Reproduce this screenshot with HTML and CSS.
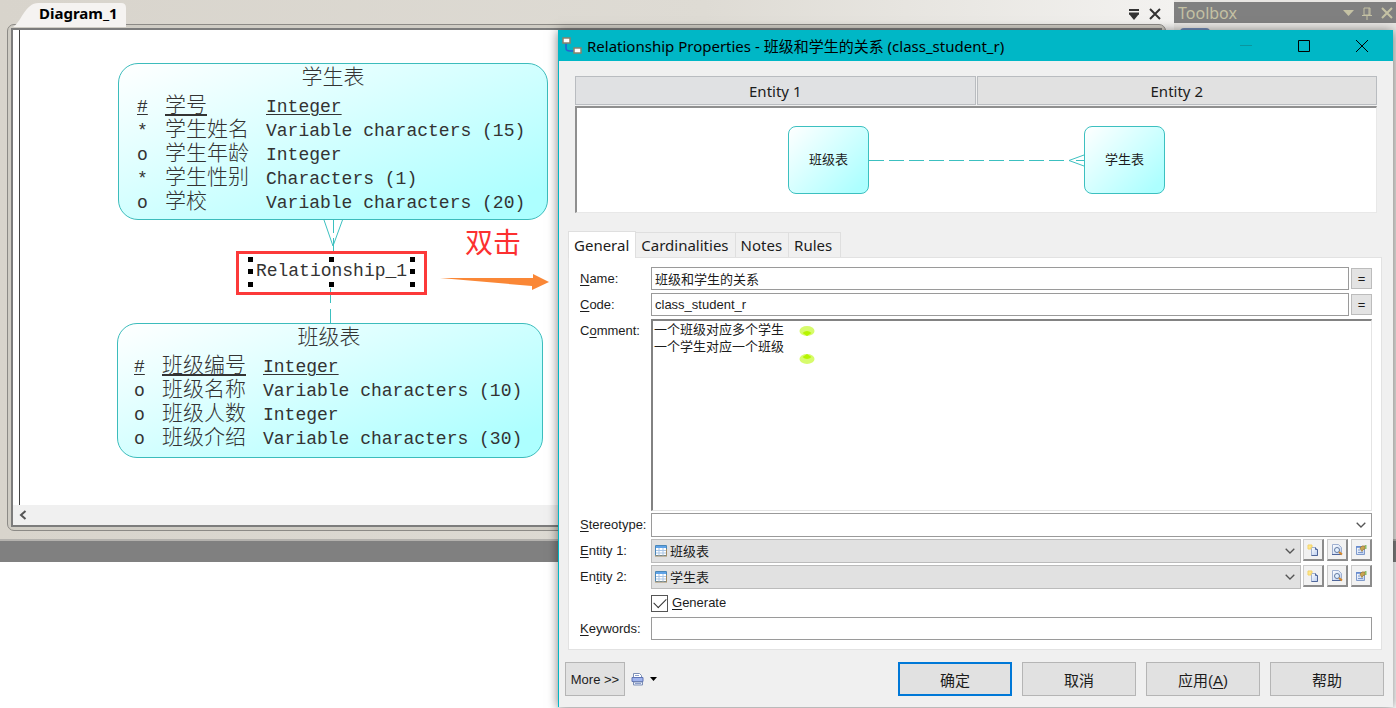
FILE: index.html
```html
<!DOCTYPE html>
<html lang="zh-CN">
<head>
<meta charset="utf-8">
<title>Relationship Properties</title>
<link rel="stylesheet" href="styles.css">
</head>
<body>
<svg class="defs" aria-hidden="true">
  <defs>
    <linearGradient id="doc" x1="0" y1="0" x2="1" y2="1"><stop offset="0" stop-color="#fff"/><stop offset="1" stop-color="#b9cdf0"/></linearGradient>
    <symbol id="i-new" viewBox="0 0 12 12">
      <path d="M4.500 3.500h4l2 2v6h-6z" fill="url(#doc)" stroke="#9fb0d0"/>
      <path d="M8.500 3.500v2h2v6h-6" fill="none" stroke="#50669a"/>
      <path d="M1 1h4v2H4v2H1z" fill="#ffe88a" stroke="#f3d36a"/>
    </symbol>
    <symbol id="i-find" viewBox="0 0 12 12">
      <path d="M1.500.5h6l3 3v7h-9z" fill="url(#doc)" stroke="#9fb0d0"/>
      <path d="M1 10.500h9" stroke="#50669a"/>
      <circle cx="6" cy="6" r="2.500" fill="#e3f1ff" stroke="#63799f"/>
      <path d="M8 8l3 2.500" stroke="#d98b2b" stroke-width="2"/>
    </symbol>
    <symbol id="i-props" viewBox="0 0 12 12">
      <path d="M1.500 2.500h8v8h-8z" fill="url(#doc)" stroke="#7f9acb"/>
      <path d="M1 3h8" stroke="#5f86cf" stroke-width="1.500"/>
      <path d="M3 6h2M3 8.500h5" stroke="#7f9acb"/>
      <path d="M5 4l2-2h3v3L8 5.500 7 7.500 6 6z" fill="#c9a552" stroke="#9a7a3c" stroke-width=".8"/>
      <path d="M10 1h1.500v4H10z" fill="#8abd68"/>
    </symbol>
    <symbol id="i-table" viewBox="0 0 12 12">
      <path d="M.5.5h11v10H.5z" fill="#fff" stroke="#4a87b8"/>
      <path d="M1 1h10v2H1z" fill="#5fa3e8"/>
      <path d="M1 5.500h10M1 8h10M4 3v8M8 3v8" stroke="#a9c5e5"/>
      <path d="M0 11h12M11.500 4v7" stroke="#a38b62"/>
    </symbol>
    <symbol id="i-chev" viewBox="0 0 10 6"><path d="M.7.7L5 5 9.300.7" fill="none" stroke="#555" stroke-width="1.300"/></symbol>
  </defs>
</svg>

<main class="workspace">
  <section class="document">
    <header class="doc-bar">
      <div class="doc-tab"><svg class="tab-shape" viewBox="0 0 116 24" preserveAspectRatio="none"><path d="M0 24C8 20 12 0 26 0h84q5 0 5 5v19z" fill="#f5f3f1"/></svg><span>Diagram_1</span></div>
      <div class="doc-tools">
        <button aria-label="Window list"><svg width="12" height="12"><path d="M1 2h10M1 5.500h10" stroke="#333" stroke-width="2"/><path d="M1 6h10L6 12z" fill="#333"/></svg></button>
        <button aria-label="Close"><svg width="12" height="12"><path d="M1 1l10 10M11 1L1 11" stroke="#333" stroke-width="2"/></svg></button>
      </div>
    </header>
    <div class="doc-frame"><div class="doc-inner">
      <div class="canvas">
        <svg class="links" width="550" height="475">
          <g fill="none" stroke="#3cc0c0" stroke-width="1">
            <path d="M304 190l9 26 9.500-26M313.500 190v13M313.500 208v13M310.500 258v15M310.500 279v14"/>
          </g>
          <path d="M420 248h93v-4l16 8-17 8v-4z" fill="#fa8736"/>
        </svg>
        <article class="entity entity-student">
          <h2>学生表</h2>
          <table>
            <tr class="key"><td><u>#</u></td><td><u>学号</u></td><td><u>Integer</u></td></tr>
            <tr><td>*</td><td>学生姓名</td><td>Variable characters (15)</td></tr>
            <tr><td>o</td><td>学生年龄</td><td>Integer</td></tr>
            <tr><td>*</td><td>学生性别</td><td>Characters (1)</td></tr>
            <tr><td>o</td><td>学校</td><td>Variable characters (20)</td></tr>
          </table>
        </article>
        <article class="entity entity-class">
          <h2>班级表</h2>
          <table>
            <tr class="key"><td><u>#</u></td><td><u>班级编号</u></td><td><u>Integer</u></td></tr>
            <tr><td>o</td><td>班级名称</td><td>Variable characters (10)</td></tr>
            <tr><td>o</td><td>班级人数</td><td>Integer</td></tr>
            <tr><td>o</td><td>班级介绍</td><td>Variable characters (30)</td></tr>
          </table>
        </article>
        <div class="relation"><span>Relationship_1</span>
          <svg class="handles" viewBox="0 0 168 30"><path d="M0 0h5v5H0zM81 0h5v5h-5zM162 0h5v5h-5zM0 12h5v5H0zM162 12h5v5h-5zM0 25h5v5H0zM81 25h5v5h-5zM162 25h5v5h-5z" fill="#000"/></svg>
        </div>
        <strong class="note">双击</strong>
      </div>
      <div class="scrollbar"><button aria-label="Scroll left"><svg width="8" height="10"><path d="M6.500 1L2 5l4.500 4" fill="none" stroke="#555" stroke-width="2"/></svg></button></div>
    </div></div>
  </section>
  <aside class="toolbox">
    <header><span>Toolbox</span>
      <svg width="52" height="14" viewBox="0 0 52 14" fill="none" stroke="#c5c2a4"><path d="M2 4h11L7.500 10z" fill="#c5c2a4" stroke="none"/><path d="M23 2h6v7h-6zM21 9.500h10M26 10v4M28 2v7"/><path d="M41 2l10 10M51 2L41 12" stroke-width="2"/></svg>
    </header>
    <div class="palette"><span></span></div>
  </aside>
</main>
<div class="band"></div>

<section class="dialog" role="dialog" aria-labelledby="dlg-title">
  <header class="titlebar">
    <svg width="20" height="20" viewBox="0 0 20 20"><path d="M4 7v5q0 3 4 3h3" fill="none" stroke="#275fd0" stroke-width="1.500"/><path d="M1 2h7v5H1zM12 12h7v5h-7z" fill="#fff" stroke="#8b826c" stroke-width="1.500"/></svg>
    <h1 id="dlg-title">Relationship Properties - <span>班级和学生的关系</span> (class_student_r)</h1>
    <div class="win-buttons">
      <button aria-label="Minimize"><svg width="12" height="12"><path d="M0 5.500h12" stroke="#0a969f"/></svg></button>
      <button aria-label="Maximize"><svg width="12" height="12"><path d="M.5.5h11v11H.5z" fill="none" stroke="#000"/></svg></button>
      <button aria-label="Close"><svg width="12" height="12"><path d="M0 0l12 12M12 0L0 12" stroke="#000"/></svg></button>
    </div>
  </header>

  <div class="ends"><button class="end">Entity 1</button><button class="end end-two">Entity 2</button></div>
  <div class="preview">
    <div class="mini">班级表</div>
    <svg class="mini-link" width="215" height="20"><g fill="none" stroke="#3cc0c0"><path d="M0 10.500h200" stroke-dasharray="15 5"/><path d="M215 5l-15 5.500L215 16M207 10.500h8"/></g></svg>
    <div class="mini">学生表</div>
  </div>

  <nav class="tabs"><button class="tab active">General</button><button class="tab">Cardinalities</button><button class="tab">Notes</button><button class="tab">Rules</button></nav>
  <form class="panel">
    <label for="name"><u>N</u>ame:</label>
    <div class="field"><input id="name" type="text" value="班级和学生的关系"><button type="button" class="eq">=</button></div>
    <label for="code"><u>C</u>ode:</label>
    <div class="field"><input id="code" type="text" value="class_student_r"><button type="button" class="eq">=</button></div>
    <label for="comment">C<u>o</u>mment:</label>
    <div class="field comment"><textarea id="comment">一个班级对应多个学生
一个学生对应一个班级</textarea>
      <svg class="marks" width="16" height="40"><ellipse cx="8" cy="6" rx="7.500" ry="5" fill="#d7fb6c"/><path d="M3.500 8q4.500-4 9 0L8 11z" fill="#b6f500"/><ellipse cx="8" cy="34" rx="7.500" ry="5" fill="#d7fb6c"/><path d="M3.500 32q4.500 4 9 0L8 29z" fill="#b6f500"/></svg>
    </div>
    <label for="stereo"><u>S</u>tereotype:</label>
    <div class="field"><div class="combo"><select id="stereo" class="plain"><option></option></select><svg class="chev"><use href="#i-chev"/></svg></div></div>
    <label for="e1"><u>E</u>ntity 1:</label>
    <div class="field">
      <div class="combo"><svg class="kind"><use href="#i-table"/></svg><select id="e1"><option>班级表</option></select><svg class="chev"><use href="#i-chev"/></svg></div>
      <div class="tools"><button type="button" aria-label="New"><svg><use href="#i-new"/></svg></button><button type="button" aria-label="Find"><svg><use href="#i-find"/></svg></button><button type="button" aria-label="Properties"><svg><use href="#i-props"/></svg></button></div>
    </div>
    <label for="e2">En<u>t</u>ity 2:</label>
    <div class="field">
      <div class="combo"><svg class="kind"><use href="#i-table"/></svg><select id="e2"><option>学生表</option></select><svg class="chev"><use href="#i-chev"/></svg></div>
      <div class="tools"><button type="button" aria-label="New"><svg><use href="#i-new"/></svg></button><button type="button" aria-label="Find"><svg><use href="#i-find"/></svg></button><button type="button" aria-label="Properties"><svg><use href="#i-props"/></svg></button></div>
    </div>
    <div class="check"><input id="gen" type="checkbox" checked><label for="gen"><u>G</u>enerate</label></div>
    <label for="keys"><u>K</u>eywords:</label>
    <div class="field"><input id="keys" type="text"></div>
  </form>

  <footer class="actions">
    <button class="more">More &gt;&gt;</button>
    <button class="print" aria-label="Print"><svg width="28" height="14"><path d="M2.500 1.500h6l2 2v3h-8z" fill="#fff" stroke="#7d8fb5"/><path d="M1 5.500h11v4H1z" fill="#9fb4ee" stroke="#6075b4"/><path d="M2.500 10h9v3h-9z" fill="#eef2ff" stroke="#7d8fb5"/><path d="M4 3.500h4M4 11.500h6" stroke="#8da0cc"/><path d="M19 5h7l-3.500 4z" fill="#000"/></svg></button>
    <div class="main-actions"><button class="ok">确定</button><button>取消</button><button>应用(<u>A</u>)</button><button>帮助</button></div>
  </footer>
</section>
</body>
</html>
```

FILE: styles.css
```css
* { box-sizing: border-box; }
body {
  margin: 0;
  min-height: 100vh;
  position: relative;
  background: #fff;
  color: #1c1c1c;
  font: 13px "Liberation Sans", "Noto Sans CJK SC", sans-serif;
  overflow: hidden;
}
button, input, select, textarea { font: inherit; color: inherit; border-radius: 0; margin: 0; }
button { padding: 0; border: 0; background: none; }
svg { display: block; }
u { text-underline-offset: 2px; }
.defs { position: absolute; width: 0; height: 0; }

/* Workspace behind the dialog */
.workspace { display: flex; background: #dad6ce; border-bottom: 2px solid #b4b2ae; }
.document { flex: 1; min-width: 0; padding: 0 8px 8px 7px; background: linear-gradient(90deg, #d8d4cc, #dedbd4 60%, #f3f2f0); }
.doc-bar { height: 24px; padding: 3px 0 0 10px; display: flex; justify-content: space-between; align-items: flex-start; }
.doc-tab { position: relative; width: 110px; height: 21px; padding-left: 22px; font: bold 15px/20px "Noto Sans", sans-serif; color: #000; }
.doc-tab span { position: relative; }
.tab-shape { position: absolute; left: -4px; top: 0; width: 114px; height: 24px; }
.doc-tools { display: flex; gap: 9px; padding: 5px 5px 0 0; }
.doc-frame { border: 1px solid #8c8a86; border-radius: 7px; padding: 3px; background: #cfccc4; }
.doc-inner { border: 2px solid #7c7c7c; border-right-width: 1px; background: #fff; }
.canvas { position: relative; height: 475px; margin-left: 6px; border-left: 1px solid #444; }
.scrollbar { height: 20px; background: #f0f0f0; padding: 5px 6px; display: flex; }
.links { position: absolute; left: 0; top: 0; }
.entity {
  position: absolute;
  border: 1px solid #3cbcbc;
  border-radius: 20px;
  background: linear-gradient(160deg, #fff, #adffff 90%);
  font: 18px/24px "Liberation Mono", "Noto Sans CJK SC", monospace;
  color: #333;
}
.entity-student { left: 98px; top: 33px; width: 430px; height: 157px; padding-left: 18px; }
.entity-class { left: 97px; top: 293px; width: 426px; height: 135px; padding-left: 16px; }
.entity h2 { margin: 0 18px 1px 0; font-size: 21px; line-height: 30px; font-weight: 300; text-align: center; }
.entity table { border-collapse: collapse; }
.entity td { padding: 0; height: 24px; line-height: 24px; white-space: nowrap; }
.entity td:first-child { width: 28px; }
.entity td:nth-child(2) { width: 101px; font-size: 21px; font-weight: 300; }
.relation {
  position: absolute; left: 216px; top: 221px; width: 191px; height: 44px;
  border: 3px solid #fc3939;
  font: 18px/34px "Liberation Mono", monospace; color: #333; text-align: center;
}
.handles { position: absolute; left: 9px; top: 3px; width: 168px; height: 30px; }
.note { position: absolute; left: 445px; top: 193px; font: 28px/36px "Noto Sans CJK SC", sans-serif; color: #fc3030; }

.toolbox { width: 222px; padding-top: 2px; background: #e8e6e3; }
.toolbox header { height: 21px; padding: 0 3px 0 4px; background: #808080; color: #c5c2a4; display: flex; justify-content: space-between; align-items: center; font: 16px/20px "Noto Sans", sans-serif; }
.palette { padding: 5px 6px; }
.palette span { display: block; width: 30px; height: 20px; border-radius: 4px; background: #6f8ab5; }
.band { height: 21px; background: #808080; }

/* Dialog window */
.dialog {
  position: absolute; left: 558px; right: 3px; top: 30px;
  border-left: 1px solid #00b7c6;
  background: #f0f0f0;
  box-shadow: 0 1px 10px rgba(0, 0, 0, .5);
}
.titlebar { height: 31px; padding-left: 3px; display: flex; align-items: center; gap: 5px; background: #00b7c6; color: #000; }
.titlebar h1 { margin: 0; flex: 1; font: 15px/22px "Noto Sans", "Noto Sans CJK SC", sans-serif; white-space: nowrap; }
.win-buttons { display: flex; gap: 46px; padding-right: 25px; }
.ends { display: flex; gap: 1px; margin: 15px 16px 0; }
.end { flex: 1; height: 29px; border: 1px solid #b9bcc0; background: #e0e1e3; font: 15px/20px "Noto Sans", sans-serif; }
.end-two { background: #e1e1e1; }
.preview { height: 107px; margin: 1px 16px 0; border: solid #e8e8e8; border-width: 2px 1px 1px 2px; border-top-color: #8f8f8f; border-left-color: #8f8f8f; background: #fff; display: flex; justify-content: center; align-items: center; }
.mini { width: 81px; height: 68px; border: 1px solid #3cc0c0; border-radius: 8px; background: linear-gradient(135deg, #fff, #adffff 90%); line-height: 66px; text-align: center; }
.tabs { display: flex; align-items: flex-end; margin: 18px 10px 0 9px; }
.tab { height: 25px; padding: 0 6px 0 5px; border: 1px solid #dfdfdf; border-bottom: 0; margin-left: -1px; font: 15px/23px "Noto Sans", sans-serif; }
.tab:last-child { padding-right: 8px; }
.tab.active { height: 27px; padding: 0 6px 0 5px; margin: 0 0 -1px; background: #fff; position: relative; }
.panel { margin: 0 11px 0 9px; padding: 9px 9px 8px 11px; border: 1px solid #e2e2e2; background: #fff; display: grid; grid-template-columns: 71px 1fr; row-gap: 2px; }
.panel > label { line-height: 24px; white-space: nowrap; }
.field { display: flex; gap: 2px; min-width: 0; position: relative; }
.field input { flex: 1; min-width: 0; height: 23px; padding: 0 3px; border: 1px solid #9a9a9a; background: #fff; outline: 0; }
.eq { width: 21px; height: 21px; margin-top: 1px; border: 1px solid #bcbcbc; background: #e3e3e3; }
.comment { height: 192px; }
.comment textarea { flex: 1; resize: none; padding: 0 1px; line-height: 17px; border: solid #e4e4e4; border-width: 2px 1px 1px 2px; border-top-color: #828282; border-left-color: #828282; outline: 0; }
.marks { position: absolute; left: 148px; top: 6px; }
.combo { flex: 1; position: relative; display: flex; }
.combo select { appearance: none; flex: 1; height: 24px; padding: 0 18px; border: 1px solid #bbb; background: #e1e1e1; }
.combo select.plain { background: #fff; border-color: #9a9a9a; }
.chev { position: absolute; right: 6px; top: 9px; width: 10px; height: 6px; }
.kind { position: absolute; left: 4px; top: 6px; width: 12px; height: 12px; }
.tools { display: flex; gap: 3px; }
.tools button { width: 21px; height: 22px; display: grid; place-items: center; background: #f2f2f2; border: solid #8c8c8c; border-width: 1px 2px 2px 1px; border-top-color: #ccc; border-left-color: #ccc; }
.tools svg { width: 12px; height: 12px; }
.check { grid-column: 2; height: 24px; display: flex; align-items: center; gap: 4px; }
.check label { width: 54px; overflow: hidden; line-height: 18px; }
.check input { appearance: none; width: 17px; height: 17px; border: 1px solid #555; background: #fff; display: grid; place-items: center; }
.check input:checked::before { content: ""; width: 11px; height: 6px; border: solid #333; border-width: 0 0 1px 1px; transform: translateY(-2px) rotate(-45deg); }
.actions { display: flex; align-items: center; padding: 12px 9px 11px 6px; }
.actions button { height: 34px; }
.more, .main-actions button { border: 1px solid #b5b5b5; background: #e1e1e1; }
.more { width: 60px; }
.print { margin-left: 6px; }
.main-actions { display: flex; gap: 10px; margin-left: auto; }
.main-actions button { width: 114px; font-size: 15px; }
.main-actions .ok { border: 2px solid #0078d7; }
```
